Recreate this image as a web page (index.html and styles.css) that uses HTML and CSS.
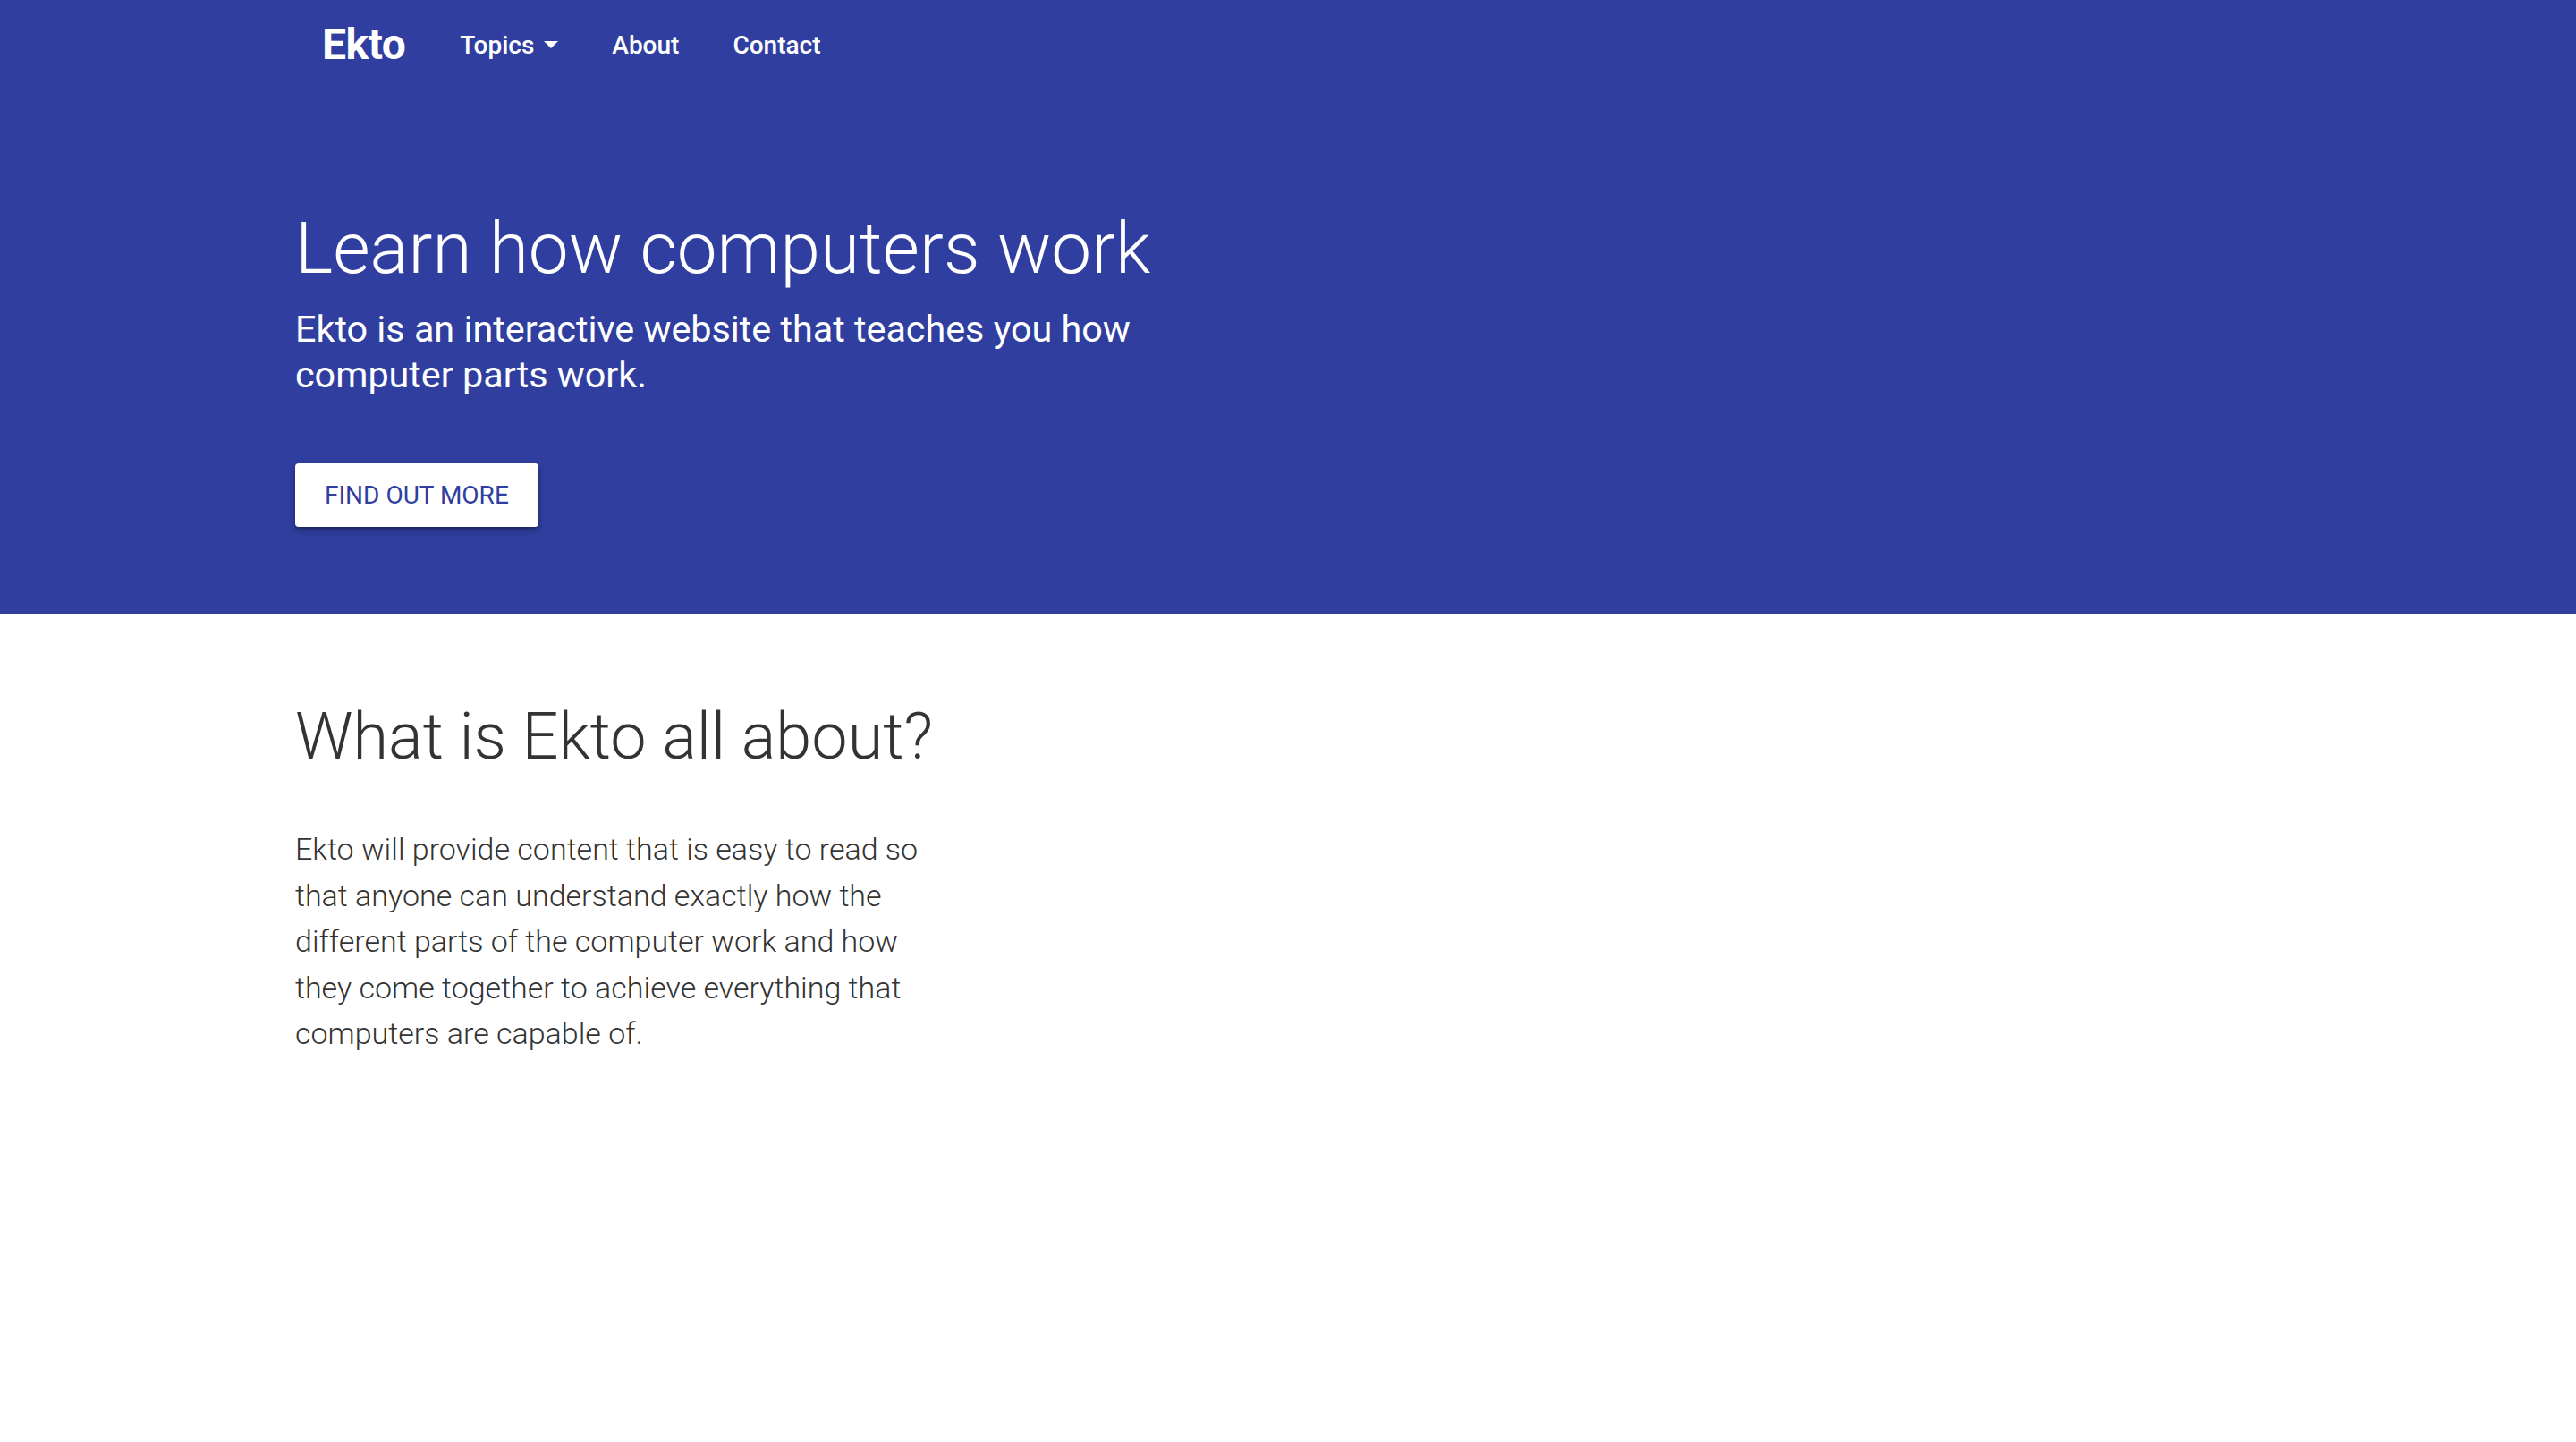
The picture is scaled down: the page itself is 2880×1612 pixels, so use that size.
FILE: index.html
```html
<!DOCTYPE html>
<html lang="en">
<head>
<meta charset="utf-8">
<title>Ekto</title>
<link rel="stylesheet" href="styles.css">
</head>
<body>
<header class="hero">
  <nav class="navbar">
    <a class="brand" href="#">Ekto</a>
    <ul class="nav-links">
      <li><a class="nav-link" href="#">Topics <span class="caret"></span></a></li>
      <li><a class="nav-link" href="#">About</a></li>
      <li><a class="nav-link" href="#">Contact</a></li>
    </ul>
  </nav>
  <div class="container hero-body">
    <div class="hero-col">
      <h1 class="hero-title">Learn how computers work</h1>
      <p class="hero-lead">Ekto is an interactive website that teaches you how computer parts work.</p>
      <a class="btn" href="#">FIND OUT MORE</a>
    </div>
  </div>
</header>
<main class="container about">
  <h2 class="about-title">What is Ekto all about?</h2>
  <p class="about-text">Ekto will provide content that is easy to read so that anyone can understand exactly how the different parts of the computer work and how they come together to achieve everything that computers are capable of.</p>
</main>
</body>
</html>
```

FILE: styles.css
```css
* { box-sizing: border-box; }
html, body { margin: 0; padding: 0; }
body {
  font-family: Roboto, "Liberation Sans", Arial, sans-serif;
  background: #ffffff;
  color: #333333;
}
a { text-decoration: none; }

.hero {
  background: #303f9f;
  color: #ffffff;
  padding-bottom: 97px;
}

.navbar {
  width: 2280px;
  margin: 0 auto;
  padding: 0 60px;
  height: 100px;
  display: flex;
  align-items: center;
}
.brand {
  color: #ffffff;
  font-weight: 700;
  font-size: 48px;
  line-height: 60px;
  margin-right: 31px;
  letter-spacing: -0.5px;
}
.nav-links {
  list-style: none;
  margin: 0;
  padding: 0;
  display: flex;
  align-items: center;
}
.nav-link {
  display: flex;
  align-items: center;
  color: #ffffff;
  font-weight: 500;
  font-size: 28px;
  line-height: 45px;
  padding: 0 30px;
}
.caret {
  display: inline-block;
  width: 0;
  height: 0;
  margin-left: 11px;
  border-left: 8px solid transparent;
  border-right: 8px solid transparent;
  border-top: 8px solid #ffffff;
}

.container {
  width: 2280px;
  margin: 0 auto;
  padding: 0 30px;
}
.hero-body { padding-top: 130px; }
.hero-col { width: 1080px; }
.hero-title {
  margin: 0;
  font-weight: 300;
  font-size: 80px;
  line-height: 96px;
}
.hero-lead {
  margin: 17px 0 0;
  font-weight: 400;
  font-size: 41.3px;
  line-height: 51px;
}
.btn {
  display: inline-block;
  margin-top: 73px;
  height: 71px;
  padding: 0 33px;
  background: #ffffff;
  color: #303f9f;
  font-size: 28px;
  line-height: 71px;
  font-weight: 400;
  border-radius: 4px;
  box-shadow: 0 4px 8px rgba(0, 0, 0, 0.28), 0 2px 3px rgba(0, 0, 0, 0.2);
}

.about { padding-top: 94px; }
.about-title {
  margin: 0;
  font-weight: 300;
  font-size: 72px;
  line-height: 88px;
  color: #333333;
}
.about-text {
  margin: 56px 0 0;
  width: 712px;
  font-weight: 300;
  font-size: 34px;
  line-height: 51.5px;
  color: #333333;
}
```
